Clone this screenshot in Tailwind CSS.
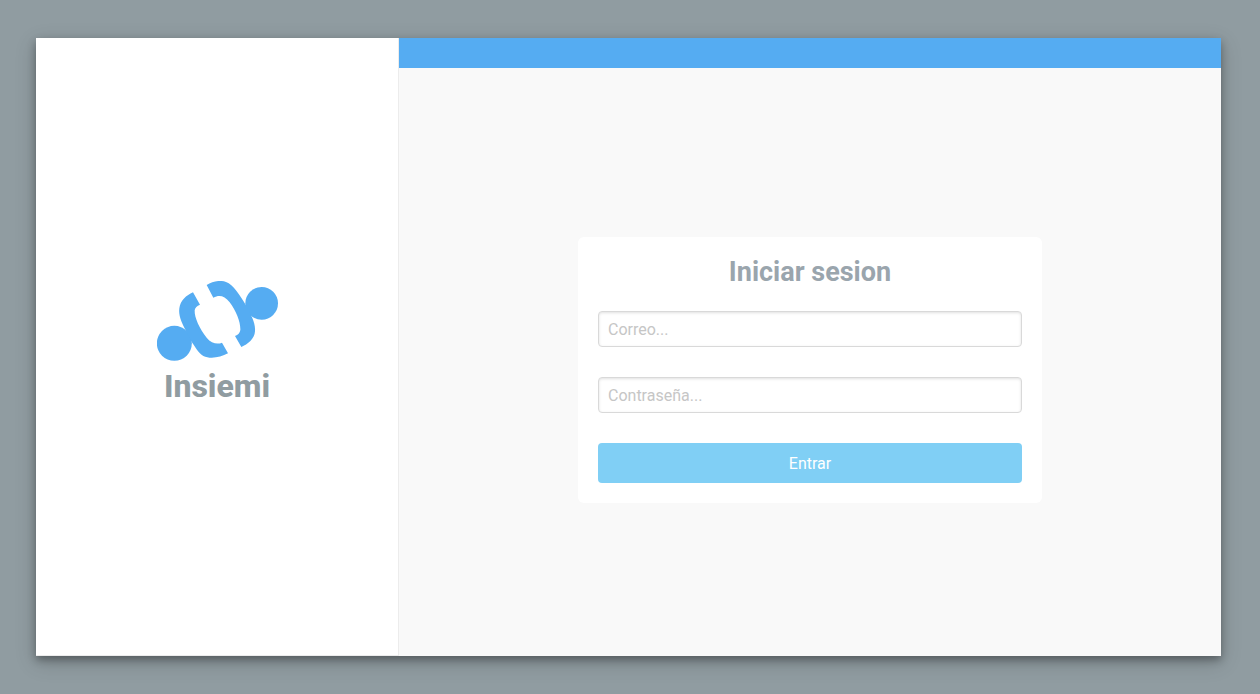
<!DOCTYPE html>
<html lang="es">
<head>
<meta charset="utf-8">
<meta name="viewport" content="width=device-width, initial-scale=1">
<title>Insiemi</title>
<script src="https://cdn.jsdelivr.net/npm/@tailwindcss/browser@4"></script>
</head>
<body class="flex min-h-screen bg-[#909ca1] py-[38px] pr-[39px] pl-9 font-[Roboto,sans-serif]">
<div class="flex flex-1 bg-[#f9f9f9] shadow-[0_4px_8px_0_rgba(0,0,0,0.3),0_6px_20px_0_rgba(0,0,0,0.19)]">
  <aside class="flex w-[363px] shrink-0 flex-col items-center justify-center border-r border-b border-[#ececec] bg-white pb-3">
    <svg class="mt-1 h-20 w-[121px]" viewBox="21 33 363 240" fill="#55acf2" aria-hidden="true">
      <circle cx="73" cy="220" r="52.5"/>
      <circle cx="335" cy="100" r="49"/>
      <path d="M129 67L150 104Q136 109 134 121C133 143 149 177 170 203C184 221 203 224 216 218L234 250C211 263 180 268 160 258C146 249 134 229 123 212L107 181C94 156 85 135 88 115C91 91 109 76 129 67Z"/>
      <path d="M170 45C188 34 210 29 228 36C250 44 269 75 287 104C302 134 317 155 315 184C314 207 293 223 274 231L255 198Q269 193 271 180C272 156 259 124 239 97C223 77 208 74 190 83Z"/>
    </svg>
    <h1 class="mt-[7px] mb-px text-[32px] leading-9 font-extrabold text-[#909ca1]">Insiemi</h1>
  </aside>
  <main class="flex min-w-0 flex-1 flex-col">
    <header class="h-[30px] bg-[#55acf2]"></header>
    <div class="flex flex-1 items-center justify-center pt-4">
      <form class="flex w-[464px] max-w-full flex-col rounded-md bg-white p-5">
        <h2 class="mb-6 text-center text-[27px] leading-[30px] font-bold text-[#9aa5ad]">Iniciar sesion</h2>
        <input type="email" aria-label="Correo" placeholder="Correo..." class="mb-[30px] h-9 rounded border border-[#d9d9d9] bg-white px-[9px] text-base text-[#555555] shadow-[inset_0_1px_3px_rgba(0,0,0,0.12)] outline-none placeholder:text-[#c6c6c6]">
        <input type="password" aria-label="Contraseña" placeholder="Contraseña..." class="mb-[30px] h-9 rounded border border-[#d9d9d9] bg-white px-[9px] text-base text-[#555555] shadow-[inset_0_1px_3px_rgba(0,0,0,0.12)] outline-none placeholder:text-[#c6c6c6]">
        <button type="submit" class="h-10 rounded bg-[#80cff5] pt-0.5 text-base text-white">Entrar</button>
      </form>
    </div>
  </main>
</div>
</body>
</html>
